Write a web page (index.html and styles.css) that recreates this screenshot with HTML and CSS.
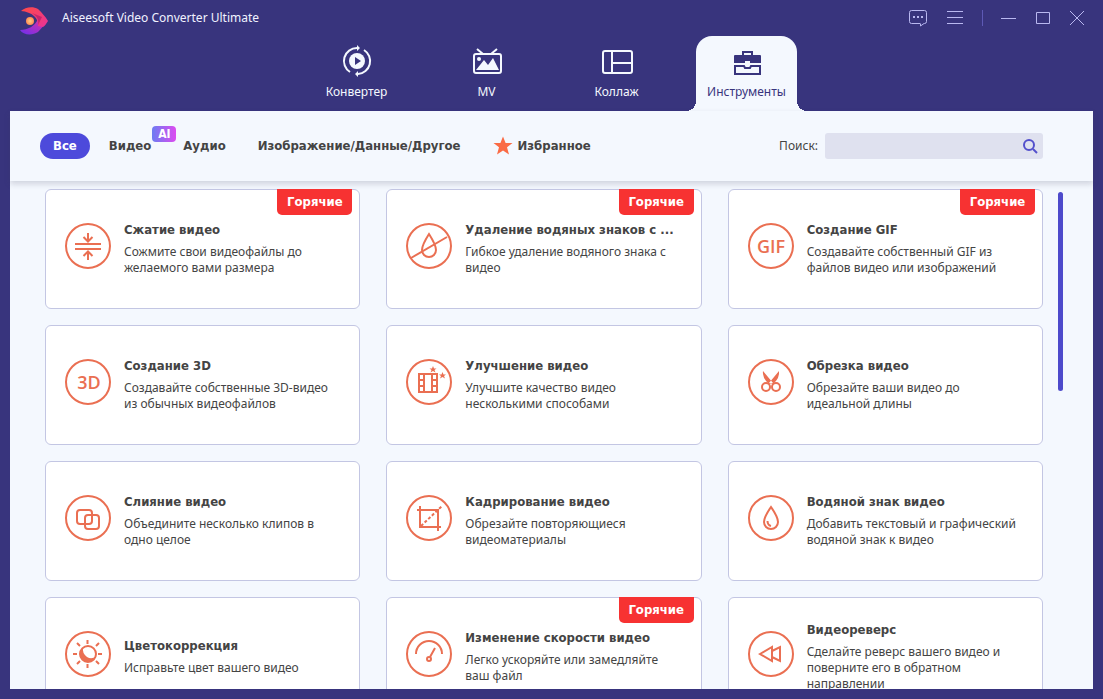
FILE: index.html
```html
<!DOCTYPE html>
<html lang="ru">
<head>
    <meta charset="UTF-8">
    <meta name="viewport" content="width=device-width, initial-scale=1.0">
    <title>Aiseesoft Video Converter Ultimate</title>
    <link rel="stylesheet" href="styles.css">
</head>
<body>
    <header class="header">
        <div class="titlebar">
            <svg class="logo" width="30" height="30" viewBox="0 0 30 30">
                <defs>
                    <linearGradient id="logoTop" x1="0" y1="0" x2="1" y2="1"><stop offset="0" stop-color="#ff4a45"/><stop offset="1" stop-color="#e8329a"/></linearGradient>
                    <linearGradient id="logoBottom" x1="0" y1="1" x2="1" y2="0"><stop offset="0" stop-color="#6a2ff0"/><stop offset="1" stop-color="#e8309c"/></linearGradient>
                    <radialGradient id="logoDot"><stop offset="0" stop-color="#ffd080"/><stop offset="1" stop-color="#ff8a55"/></radialGradient>
                </defs>
                <path d="M2 24C10 24 17 20 20 13L29 15C26 19 23 23 20 26C14 30 5 29 2 24Z" fill="url(#logoBottom)"/>
                <path d="M3 5C7 1 15 0 20 3C24 7 27 10 30 15C28 18 27 20 25 21L20 20C21 12 14 6 3 5Z" fill="url(#logoTop)"/>
                <path d="M14 7C19 10 21 14 20 19L24 11Z" fill="#a51868" opacity="0.6"/>
                <circle cx="12" cy="15" r="4" fill="url(#logoDot)"/>
            </svg>
            <h1>Aiseesoft Video Converter Ultimate</h1>
            <div class="window_btns">
                <button type="button" aria-label="Отзыв"><svg width="20" height="18" viewBox="0 0 20 18"><path d="M12 14.5H3.5Q1.5 14.5 1.5 12.5V3.5Q1.5 1.5 3.5 1.5H16.5Q18.5 1.5 18.5 3.5V12.5Q18.5 14.5 16.5 14.5H16L12.5 17V14.5"/><path d="M5 8h2M9 8h2M13 8h2" stroke-width="2"/></svg></button>
                <button type="button" aria-label="Меню"><svg width="18" height="18" viewBox="0 0 18 18"><path d="M1 2.5H17M1 8.5H17M1 14.5H17"/></svg></button>
                <span class="line"></span>
                <button type="button" aria-label="Свернуть"><svg width="16" height="18" viewBox="0 0 16 18"><path d="M0 9.5H15"/></svg></button>
                <button type="button" aria-label="Развернуть"><svg width="16" height="18" viewBox="0 0 16 18"><path d="M1.5 3.5H14.5V14.5H1.5Z"/></svg></button>
                <button type="button" aria-label="Закрыть"><svg width="16" height="18" viewBox="0 0 16 18"><path d="M1 2L15 16M15 2L1 16"/></svg></button>
            </div>
        </div>
        <nav class="tabs">
            <a href="#">
                <svg width="32" height="32" viewBox="0 0 32 32" fill="none" stroke="currentColor" stroke-width="2">
                    <circle cx="16" cy="15" r="8" fill="currentColor" stroke="none"/>
                    <path d="M14 11L20 15L14 19Z" fill="#38347d" stroke="none"/>
                    <path d="M9 26A13 13 0 0 1 16 2M23 4A13 13 0 0 1 17 28"/>
                    <path d="M16 -1L19 2L16 5ZM17 25L14 28L17 31Z" fill="currentColor" stroke="none"/>
                </svg>
                <span>Конвертер</span>
            </a>
            <a href="#">
                <svg width="32" height="32" viewBox="0 0 32 32" fill="none" stroke="currentColor" stroke-width="2">
                    <rect x="3" y="8" width="27" height="19" rx="2"/>
                    <path d="M6 3L12 8M26 3L20 8"/>
                    <circle cx="8" cy="13" r="2" fill="currentColor" stroke="none"/>
                    <path d="M5 24L13 14L17 19L22 12L28 24Z" fill="currentColor" stroke="none"/>
                </svg>
                <span>MV</span>
            </a>
            <a href="#">
                <svg width="32" height="32" viewBox="0 0 32 32" fill="none" stroke="currentColor" stroke-width="2">
                    <rect x="2" y="5" width="29" height="22" rx="2"/>
                    <path d="M11 5V27M11 17H31"/>
                </svg>
                <span>Коллаж</span>
            </a>
            <a href="#" class="on">
                <svg width="32" height="32" viewBox="0 0 32 32" fill="none" stroke="currentColor" stroke-width="2">
                    <path d="M12 10V6H21V10"/>
                    <path d="M4 9H29Q30 9 30 10V17H19V15H14V17H3V10Q3 9 4 9Z" fill="currentColor" stroke="none"/>
                    <path d="M13 20H4V28H29V20H20L19 22H14Z"/>
                </svg>
                <span>Инструменты</span>
            </a>
        </nav>
    </header>

    <main class="panel">
        <div class="toolbar">
            <ul class="filter">
                <li><button type="button" class="on">Все</button></li>
                <li>
                    <button type="button">Видео</button>
                    <span class="ai">AI</span>
                </li>
                <li><button type="button">Аудио</button></li>
                <li><button type="button">Изображение/Данные/Другое</button></li>
                <li><button type="button" class="favorite"><svg width="20" height="20" viewBox="0 0 20 20"><path d="M10 0.500L12.600 7H19.500L14 11.300L16 18.500L10 14.500L4 18.500L6 11.300L0.500 7H7.400Z" fill="#fa6b45"/></svg>Избранное</button></li>
            </ul>
            <form class="search">
                <label for="search">Поиск:</label>
                <div class="search_box">
                    <input type="text" id="search">
                    <button type="submit" aria-label="Найти"><svg width="16" height="16" viewBox="0 0 16 16" fill="none" stroke="#5350cc" stroke-width="2"><circle cx="7" cy="7" r="5"/><path d="M11 11L15 15"/></svg></button>
                </div>
            </form>
        </div>

        <div class="content">
            <ul class="tools">
                <li class="card">
                    <svg class="icon" viewBox="0 0 46 46"><circle cx="23" cy="23" r="22"/><path d="M10 21H36M10 26H36M23 10V18M18.5 14L23 18.5L27.5 14M23 37V29M18.5 33L23 28.5L27.5 33"/></svg>
                    <div class="txt">
                        <h2>Сжатие видео</h2>
                        <p>Сожмите свои видеофайлы до желаемого вами размера</p>
                    </div>
                    <span class="hot">Горячие</span>
                </li>
                <li class="card">
                    <svg class="icon" viewBox="0 0 46 46"><circle cx="23" cy="23" r="22"/><path d="M23 11Q16 22 16 27A7 7 0 0 0 30 27Q30 22 23 11ZM5 35L41 14"/></svg>
                    <div class="txt">
                        <h2>Удаление водяных знаков с ...</h2>
                        <p>Гибкое удаление водяного знака с видео</p>
                    </div>
                    <span class="hot">Горячие</span>
                </li>
                <li class="card">
                    <svg class="icon" viewBox="0 0 46 46"><circle cx="23" cy="23" r="22"/><text x="23" y="30">GIF</text></svg>
                    <div class="txt">
                        <h2>Создание GIF</h2>
                        <p>Создавайте собственный GIF из файлов видео или изображений</p>
                    </div>
                    <span class="hot">Горячие</span>
                </li>
                <li class="card">
                    <svg class="icon" viewBox="0 0 46 46"><circle cx="23" cy="23" r="22"/><text x="24" y="30">3D</text></svg>
                    <div class="txt">
                        <h2>Создание 3D</h2>
                        <p>Создавайте собственные 3D-видео из обычных видеофайлов</p>
                    </div>
                </li>
                <li class="card">
                    <svg class="icon" viewBox="0 0 46 46"><circle cx="23" cy="23" r="22"/><path d="M13 15H31V33H13ZM18 15V33M26 15V33M13 21H18M13 27H18M26 21H31M26 27H31"/><path class="fill" d="M27 7l1 2.500h2.500l-2 1.500 1 2.500-2.500-1.500-2.500 1.500 1-2.500-2-1.500h2.500zM36.500 13l1 2.500h2.500l-2 1.500 1 2.500-2.500-1.500-2.500 1.500 1-2.500-2-1.500h2.500z"/></svg>
                    <div class="txt">
                        <h2>Улучшение видео</h2>
                        <p>Улучшите качество видео несколькими способами</p>
                    </div>
                </li>
                <li class="card">
                    <svg class="icon" viewBox="0 0 46 46"><circle cx="23" cy="23" r="22"/><circle cx="18" cy="28" r="4"/><circle cx="28" cy="28" r="4"/><path class="fill" d="M15 12L25 24L21 25Q14 19 15 12ZM31 12L21 24L25 25Q32 19 31 12Z"/></svg>
                    <div class="txt">
                        <h2>Обрезка видео</h2>
                        <p>Обрезайте ваши видео до идеальной длины</p>
                    </div>
                </li>
                <li class="card">
                    <svg class="icon" viewBox="0 0 46 46"><circle cx="23" cy="23" r="22"/><rect x="12" y="15" width="15" height="14" rx="3"/><rect x="20" y="20" width="14" height="14" rx="3"/></svg>
                    <div class="txt">
                        <h2>Слияние видео</h2>
                        <p>Объедините несколько клипов в одно целое</p>
                    </div>
                </li>
                <li class="card">
                    <svg class="icon" viewBox="0 0 46 46"><circle cx="23" cy="23" r="22"/><path d="M11 15H32V36M14 11V32H35"/><path d="M15 31L36 11" stroke-dasharray="3 2"/></svg>
                    <div class="txt">
                        <h2>Кадрирование видео</h2>
                        <p>Обрезайте повторяющиеся видеоматериалы</p>
                    </div>
                </li>
                <li class="card">
                    <svg class="icon" viewBox="0 0 46 46"><circle cx="23" cy="23" r="22"/><path d="M23 12Q16 22 16 27A7 7 0 0 0 30 27Q30 22 23 12ZM19.500 26Q19.500 30 23 31"/></svg>
                    <div class="txt">
                        <h2>Водяной знак видео</h2>
                        <p>Добавить текстовый и графический водяной знак к видео</p>
                    </div>
                </li>
                <li class="card">
                    <svg class="icon" viewBox="0 0 46 46"><circle cx="23" cy="23" r="22"/><circle cx="23" cy="23" r="8"/><path class="fill" d="M18 17A8 8 0 1 0 31 25Q27 29 22 26Q17 22 18 17Z"/><path d="M22.500 9V13M22.500 33V37M8 23H12M33 23H37M12 12L15 15M34 12L31 15M12 33L15 30M34 33L31 30"/></svg>
                    <div class="txt">
                        <h2>Цветокоррекция</h2>
                        <p>Исправьте цвет вашего видео</p>
                    </div>
                </li>
                <li class="card">
                    <svg class="icon" viewBox="0 0 46 46"><circle cx="23" cy="23" r="22"/><path d="M10 23A13 13 0 0 1 36 23M24 26L29 17"/><circle cx="23" cy="28" r="2"/></svg>
                    <div class="txt">
                        <h2>Изменение скорости видео</h2>
                        <p>Легко ускоряйте или замедляйте ваш файл</p>
                    </div>
                    <span class="hot">Горячие</span>
                </li>
                <li class="card">
                    <svg class="icon" viewBox="0 0 46 46"><circle cx="23" cy="23" r="22"/><path d="M12 23L24 16V30ZM24 20L32 16V30L24 26"/></svg>
                    <div class="txt">
                        <h2>Видеореверс</h2>
                        <p>Сделайте реверс вашего видео и поверните его в обратном направлении</p>
                    </div>
                </li>
            </ul>
            <div class="scrollbar"></div>
        </div>
    </main>
</body>
</html>
```
FILE: styles.css
```css
* { margin:0; padding:0; box-sizing:border-box;}
ul,ol,li { list-style:none;}
a { text-decoration:none; color:inherit;}
button,input { font:inherit; color:inherit; border:0; background:none;}
svg { display:block; flex-shrink:0; overflow:visible;}

body { height:100vh; display:flex; flex-direction:column; overflow:hidden; background-color:#38347d; color:#444; font-family:"Noto Sans", sans-serif; font-size:12px; line-height:16px;}

/* header */
.titlebar { height:36px; padding:0 18px; display:flex; align-items:center; color:#f0f2ff;}
.logo { margin-top:6px;}
.titlebar h1 { margin-left:14px; font-size:12px; font-weight:normal;}
.window_btns { margin-left:auto; display:flex; align-items:center; gap:18px;}
.window_btns svg { fill:none; stroke:#b9b8f0; stroke-width:1;}
.window_btns .line { width:1px; height:16px; background-color:#5d59b5;}

.tabs { display:flex; justify-content:center; gap:29px; color:#f4f8fe;}
.tabs a { position:relative; width:101px; height:75px; padding-top:10px; display:flex; flex-direction:column; align-items:center; gap:6px;}
.tabs .on { background-color:#f4f8fe; color:#38347d; border-radius:16px 16px 0 0;}
.tabs .on::before,
.tabs .on::after { content:""; position:absolute; bottom:0; width:10px; height:10px;}
.tabs .on::before { right:100%; background:radial-gradient(circle at 0 0, transparent 10px, #f4f8fe 10px);}
.tabs .on::after { left:100%; background:radial-gradient(circle at 100% 0, transparent 10px, #f4f8fe 10px);}

/* panel */
.panel { flex:1; min-height:0; margin:0 10px 10px; display:flex; flex-direction:column; background-color:#f4f8fe;}
.toolbar { position:relative; height:70px; padding:0 50px 0 30px; display:flex; align-items:center; justify-content:space-between; flex-shrink:0; box-shadow:0 3px 6px rgba(60,60,90,0.2);}
.filter { display:flex; gap:6px; font-family:"DejaVu Sans Condensed", sans-serif; font-size:13px; font-weight:bold;}
.filter li { position:relative;}
.filter button { height:26px; padding:0 13px; border-radius:13px; white-space:nowrap;}
.filter .on { background-color:#4d4adb; color:#fff;}
.filter .favorite { display:flex; align-items:center; gap:5px;}
.ai { position:absolute; right:-12px; top:-7px; width:24px; height:16px; border-radius:4px; background:linear-gradient(to right, #6b7cf2, #dd4bf0); color:#fff; font-size:12px; text-align:center;}

.search { display:flex; align-items:center; gap:7px;}
.search_box { position:relative;}
.search_box input { display:block; width:218px; height:26px; padding:0 30px 0 8px; border-radius:3px; background-color:#dfe1ef;}
.search_box button { position:absolute; right:5px; top:5px;}

/* tool cards */
.content { flex:1; min-height:0; padding:8px 30px 0 35px; display:flex; gap:15px; overflow:hidden;}
.tools { flex:1; display:grid; grid-template-columns:repeat(3, 1fr); grid-auto-rows:120px; gap:16px 26px;}
.card { position:relative; min-width:0; padding:0 19px; display:flex; align-items:center; gap:13px; border:1px solid #c3c6e3; border-radius:6px; background-color:#fff;}
.icon { width:46px; height:46px; margin-bottom:6px; fill:none; stroke:#ea6f52; stroke-width:2;}
.icon .fill { fill:#ea6f52; stroke:none;}
.icon text { fill:#ea6f52; stroke:none; font-family:"Open Sans", sans-serif; font-size:18px; font-weight:600; text-anchor:middle;}
.txt { min-width:0;}
.txt h2 { margin-bottom:6px; font-family:"DejaVu Sans Condensed", sans-serif; font-size:13px; line-height:16px; white-space:nowrap;}
.hot { position:absolute; right:7px; top:-1px; width:75px; height:26px; line-height:26px; border-radius:0 0 5px 5px; background-color:#f73232; color:#fff; font-family:"DejaVu Sans Condensed", sans-serif; font-size:13px; font-weight:bold; text-align:center;}

.scrollbar { width:5px; height:199px; margin-top:3px; border-radius:3px; background-color:#4d4acb;}
```
